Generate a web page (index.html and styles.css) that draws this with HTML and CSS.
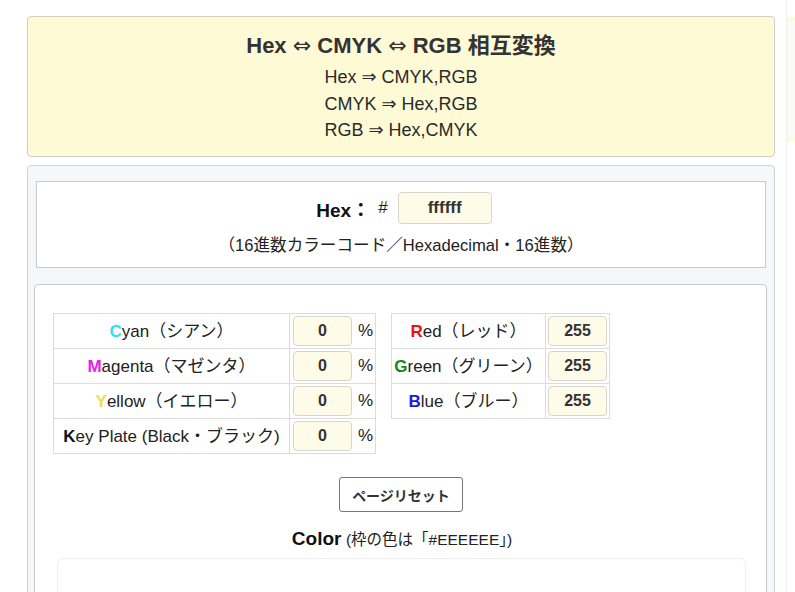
FILE: index.html
```html
<!DOCTYPE html>
<html lang="ja">
<head>
<meta charset="utf-8">
<title>Hex ⇔ CMYK ⇔ RGB 相互変換</title>
<link rel="stylesheet" href="styles.css">
</head>
<body>
<div class="page">
  <main class="main">
    <section class="intro">
      <h1 class="title">Hex <span class="arr">⇔</span> CMYK <span class="arr">⇔</span> RGB 相互変換</h1>
      <div class="modes">
        <div>Hex <span class="arr">⇒</span> CMYK,RGB</div>
        <div>CMYK <span class="arr">⇒</span> Hex,RGB</div>
        <div>RGB <span class="arr">⇒</span> Hex,CMYK</div>
      </div>
    </section>
    <section class="tool">
      <div class="hexbox">
        <div class="hexrow">
          <span class="hexlabel">Hex：</span>
          <span class="hash">#</span>
          <span class="field hexfield">ffffff</span>
        </div>
        <div class="hexnote">（16進数カラーコード／Hexadecimal・16進数）</div>
      </div>
      <div class="convbox">
        <div class="tables">
          <table class="ctable cmyk">
            <tr><td class="lab"><b class="c">C</b>yan（シアン）</td><td class="val"><span class="field num">0</span><span class="pct">%</span></td></tr>
            <tr><td class="lab"><b class="m">M</b>agenta（マゼンタ）</td><td class="val"><span class="field num">0</span><span class="pct">%</span></td></tr>
            <tr><td class="lab"><b class="y">Y</b>ellow（イエロー）</td><td class="val"><span class="field num">0</span><span class="pct">%</span></td></tr>
            <tr><td class="lab"><b class="k">K</b>ey Plate (Black・ブラック)</td><td class="val"><span class="field num">0</span><span class="pct">%</span></td></tr>
          </table>
          <table class="ctable rgb">
            <tr><td class="lab"><b class="r">R</b>ed（レッド）</td><td class="val"><span class="field num">255</span></td></tr>
            <tr><td class="lab"><b class="g">G</b>reen（グリーン）</td><td class="val"><span class="field num">255</span></td></tr>
            <tr><td class="lab"><b class="b">B</b>lue（ブルー）</td><td class="val"><span class="field num">255</span></td></tr>
          </table>
        </div>
        <div class="btnrow"><button class="reset">ページリセット</button></div>
        <div class="colorhead"><b>Color</b> <span>(枠の色は「#EEEEEE」)</span></div>
        <div class="swatch"></div>
      </div>
    </section>
  </main>
  <aside class="side">
    <div class="sidetop"></div>
    <div class="sideband"></div>
    <div class="sidephoto"><div class="photoline"></div></div>
  </aside>
</div>
</body>
</html>
```
FILE: styles.css
```css
* { box-sizing: border-box; }
html, body { margin: 0; padding: 0; background: #fff; }
body {
  font-family: "Liberation Sans", "Noto Sans CJK JP", sans-serif;
  color: #333;
  width: 795px;
  height: 592px;
  overflow: hidden;
}
.page {
  display: flex;
  padding-left: 27px;
  gap: 11px;
}
.main {
  width: 748px;
  flex: none;
  padding-top: 16px;
  display: flex;
  flex-direction: column;
  gap: 8px;
}
.intro {
  height: 141px;
  background: #fffad6;
  border: 1px solid #d2d0c4;
  border-radius: 4px;
  text-align: center;
  padding-top: 16px;
}
.title {
  margin: 0;
  font-size: 22px;
  line-height: 25px;
  font-weight: bold;
  color: #333;
}
.arr {
  font-family: "DejaVu Sans", sans-serif;
  font-weight: normal;
  font-size: 1em;
  line-height: 1;
}
.modes {
  display: inline-block;
  text-align: left;
  margin-top: 6px;
  font-size: 18px;
  line-height: 26.6px;
  color: #2a2a2a;
}
.tool {
  background: #f5f8fb;
  border: 1px solid #cdd3da;
  border-radius: 4px;
  padding: 15px 7px 0 6px;
  height: 440px;
}
.hexbox {
  background: #fff;
  border: 1px solid #c9cccf;
  margin: 0 1px 0 2px;
  height: 87px;
  text-align: center;
  padding-top: 10px;
}
.hexrow {
  display: flex;
  justify-content: center;
  align-items: center;
  height: 32px;
  padding-left: 6px;
}
.hexlabel { font-size: 19px; font-weight: bold; color: #111; }
.hash { font-size: 17px; color: #222; margin: 0 10px 0 8px; }
.field {
  display: inline-flex;
  align-items: center;
  justify-content: center;
  background: #fffbe9;
  border: 1px solid #d8d6cc;
  border-radius: 4px;
  font-weight: bold;
  color: #333;
}
.hexfield { width: 94px; height: 32px; font-size: 17px; }
.hexnote { margin-top: 11px; font-size: 16.6px; line-height: 22px; color: #222; }
.convbox {
  margin-top: 16px;
  background: #fff;
  border: 1px solid #c9cccf;
  border-radius: 4px;
  height: 330px;
  padding: 28px 0 0 18px;
}
.tables { display: flex; gap: 15px; align-items: flex-start; }
.ctable {
  border-collapse: collapse;
  font-size: 17px;
  color: #222;
}
.ctable td {
  border: 1px solid #dcdcdc;
  height: 35px;
  padding: 0;
}
.lab { text-align: center; padding-bottom: 3px !important; }
.cmyk .lab { width: 236px; }
.cmyk .val { width: 86px; padding-left: 3px; }
.rgb .lab { width: 154px; }
.rgb .val { width: 64px; padding-left: 2px; }
.val { white-space: nowrap; }
.num { width: 59px; height: 30px; font-size: 16px; vertical-align: middle; }
.pct { font-size: 17px; margin-left: 6px; vertical-align: middle; }
.c { color: #2ee0f0; }
.m { color: #e81ee8; }
.y { color: #f0e048; }
.k { color: #111; }
.r { color: #f01010; }
.g { color: #118811; }
.b { color: #1a1ae0; }
.btnrow { display: flex; justify-content: center; margin-top: 23px; padding-right: 17px; }
.reset {
  width: 124px;
  height: 35px;
  background: #fff;
  border: 1px solid #777;
  border-radius: 3px;
  font-family: "Liberation Sans", "Noto Sans CJK JP", sans-serif;
  font-size: 14px;
  font-weight: 600;
  color: #333;
}
.colorhead {
  text-align: center;
  margin-top: 15px;
  padding-right: 15px;
  color: #111;
  line-height: 24px;
}
.colorhead b { font-size: 19px; }
.colorhead span { font-size: 15.5px; color: #222; }
.swatch {
  margin: 6px 0 0 4px;
  width: 689px;
  height: 60px;
  border: 1px solid #eee;
  border-radius: 6px;
}
.side {
  flex: 1;
  display: flex;
  flex-direction: column;
  border-left: 1px solid #f0f0f0;
}
.sidetop {
  height: 14px;
  margin-left: 8px;
  border-left: 1px solid #ccc;
  border-bottom: 1px solid #ccc;
  border-bottom-left-radius: 4px;
}
.sideband {
  margin-top: 3px;
  height: 124px;
  background: #fafaf6;
  border-top: 4px solid #fdfbd8;
  border-bottom: 4px solid #fdfbd8;
}
.sidephoto {
  margin-top: 13px;
  margin-left: 9px;
  height: 450px;
  background: linear-gradient(180deg, #5aa6cc 0%, #9cc0d4 10%, #a9c4d2 30%, #aac2d0 100%);
}
.photoline { height: 154px; border-bottom: 1px solid #8fa9b8; }
```
